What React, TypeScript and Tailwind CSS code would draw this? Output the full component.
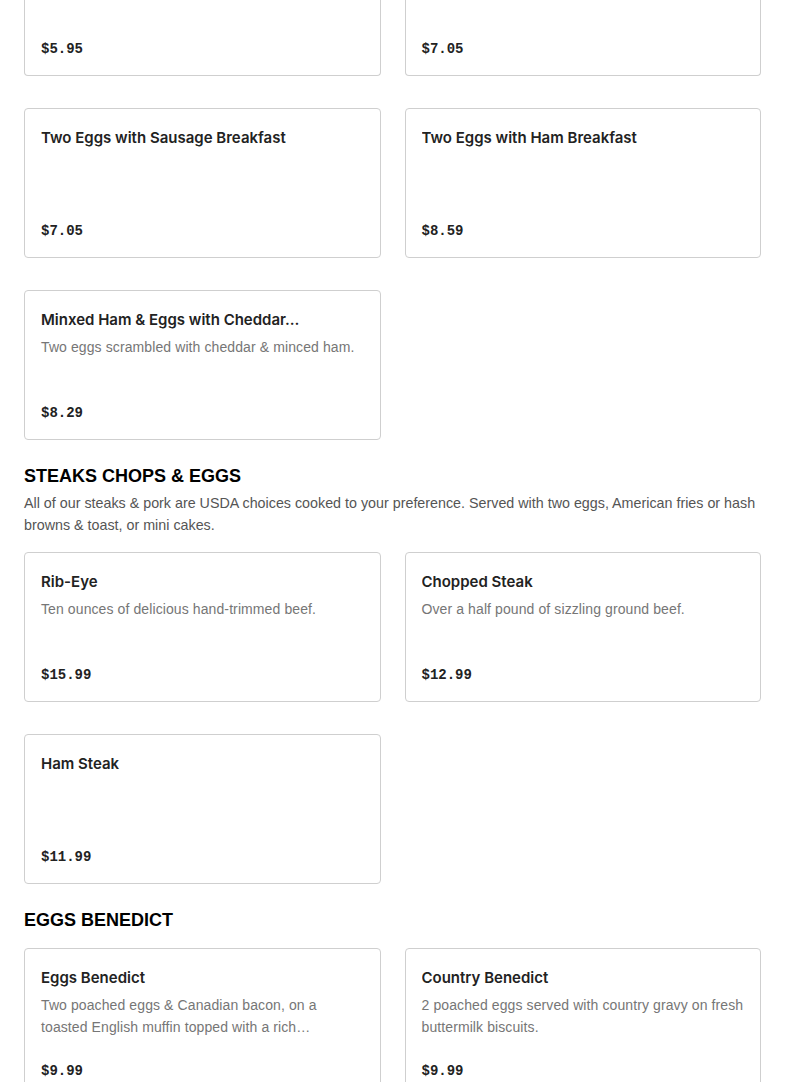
import React from "react";

type Item = { name: string; desc?: string; price: string };

const sans = { fontFamily: "Inter, 'Noto Sans', sans-serif" };
const descFont = { fontFamily: "'Liberation Sans', Arial, sans-serif" };
const mono = { fontFamily: "'Liberation Mono', 'DejaVu Sans Mono', monospace" };

function Price({ value }: { value: string }) {
  return (
    <div className="mt-auto text-[14px] font-bold leading-[24px] text-[#222]" style={mono}>
      {value}
    </div>
  );
}

function Card({ item }: { item: Item }) {
  return (
    <div className="flex h-[150px] flex-col rounded-[4px] border border-[#cfcfcf] bg-white px-4 pt-4 pb-[14px]">
      <div className="truncate text-[15px] font-semibold leading-[26px] text-[#222]" style={sans}>
        {item.name}
      </div>
      {item.desc && (
        <div
          className="mt-[3px] text-[14px] leading-[22px] tracking-[0.1px] text-[#767676]"
          style={descFont}
        >
          {item.desc}
        </div>
      )}
      <Price value={item.price} />
    </div>
  );
}

function CutCard({ price }: { price: string }) {
  return (
    <div className="flex h-[76px] flex-col rounded-b-[4px] border border-t-0 border-[#cfcfcf] bg-white px-4 pb-[14px]">
      <Price value={price} />
    </div>
  );
}

function Grid({ items }: { items: Item[] }) {
  return (
    <div className="grid grid-cols-2 gap-x-6 gap-y-8">
      {items.map((it, i) => (
        <Card key={i} item={it} />
      ))}
    </div>
  );
}

function Heading({ children }: { children: React.ReactNode }) {
  return (
    <h2
      className="mt-6 text-[18px] font-black leading-[24px] text-black"
      style={{ fontFamily: "'Liberation Sans', Arial, sans-serif" }}
    >
      {children}
    </h2>
  );
}

export default function App() {
  return (
    <div className="min-h-screen bg-white px-6">
      <div className="grid grid-cols-2 gap-x-6 gap-y-8">
        <CutCard price="$5.95" />
        <CutCard price="$7.05" />
        <Card item={{ name: "Two Eggs with Sausage Breakfast", price: "$7.05" }} />
        <Card item={{ name: "Two Eggs with Ham Breakfast", price: "$8.59" }} />
        <Card
          item={{
            name: "Minxed Ham & Eggs with Cheddar…",
            desc: "Two eggs scrambled with cheddar & minced ham.",
            price: "$8.29",
          }}
        />
      </div>
      <Heading>STEAKS CHOPS &amp; EGGS</Heading>
      <p className="mt-1 mb-4 text-[14.3px] leading-[22px] text-[#555]" style={descFont}>
        All of our steaks &amp; pork are USDA choices cooked to your preference. Served with two eggs, American fries or hash browns &amp; toast, or mini cakes.
      </p>
      <Grid
        items={[
          { name: "Rib-Eye", desc: "Ten ounces of delicious hand-trimmed beef.", price: "$15.99" },
          { name: "Chopped Steak", desc: "Over a half pound of sizzling ground beef.", price: "$12.99" },
          { name: "Ham Steak", price: "$11.99" },
        ]}
      />
      <Heading>EGGS BENEDICT</Heading>
      <div className="mt-4">
        <Grid
          items={[
            {
              name: "Eggs Benedict",
              desc: "Two poached eggs & Canadian bacon, on a toasted English muffin topped with a rich…",
              price: "$9.99",
            },
            {
              name: "Country Benedict",
              desc: "2 poached eggs served with country gravy on fresh buttermilk biscuits.",
              price: "$9.99",
            },
          ]}
        />
      </div>
    </div>
  );
}
